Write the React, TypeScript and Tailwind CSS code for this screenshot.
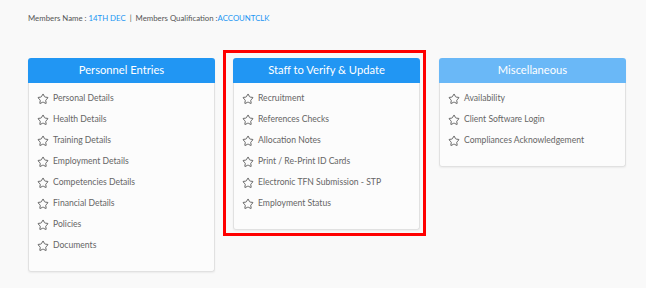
import { Star } from "lucide-react";

interface PanelProps {
  title: string;
  items: string[];
  light?: boolean;
}

const personnel = [
  "Personal Details",
  "Health Details",
  "Training Details",
  "Employment Details",
  "Competencies Details",
  "Financial Details",
  "Policies",
  "Documents",
];

const verify = [
  "Recruitment",
  "References Checks",
  "Allocation Notes",
  "Print / Re-Print ID Cards",
  "Electronic TFN Submission - STP",
  "Employment Status",
];

const misc = ["Availability", "Client Software Login", "Compliances Acknowledgement"];

function Panel({ title, items, light }: PanelProps) {
  return (
    <div className="w-[187px] rounded-[3px] shadow-[0_1px_2px_rgba(0,0,0,0.06)]">
      <div
        className={`flex h-[25px] items-center justify-center rounded-t-[3px] text-[11.2px] text-white ${
          light ? "bg-[#6ab8f7]" : "bg-[#2196f3]"
        }`}
      >
        {title}
      </div>
      <ul className="rounded-b-[3px] border-x border-b border-[#e1e1e1] bg-[#fcfcfc] pt-[5px] pb-[15px] pl-[8px]">
        {items.map((item) => (
          <li key={item} className="flex h-[21px] items-center gap-[4px] text-[8.6px] text-[#666]">
            <Star size={12} strokeWidth={1.8} className="text-[#555]" />
            <span>{item}</span>
          </li>
        ))}
      </ul>
    </div>
  );
}

export default function App() {
  return (
    <div className="h-[288px] w-[646px] bg-[#f9f9f9] font-['Lato',sans-serif]">
      <div className="pl-[28px] pt-[11px] text-[7.8px] leading-[14px] text-[#555]">
        Members Name : <span className="text-[#2196f3]">14TH DEC</span>
        <span className="mx-[4px]">|</span>
        Members Qualification :<span className="text-[#2196f3]">ACCOUNTCLK</span>
      </div>
      <div className="mt-[25px] flex items-start pl-[28px]">
        <div className="mt-[8px] w-[186px]">
          <Panel title="Personnel Entries" items={personnel} />
        </div>
        <div className="ml-[9px] border-[3px] border-[#ff0000] pt-[5px] pr-[3px] pb-[3px] pl-[7px]">
          <Panel title="Staff to Verify & Update" items={verify} />
        </div>
        <div className="ml-[13px] mt-[8px]">
          <Panel title="Miscellaneous" items={misc} light />
        </div>
      </div>
    </div>
  );
}
